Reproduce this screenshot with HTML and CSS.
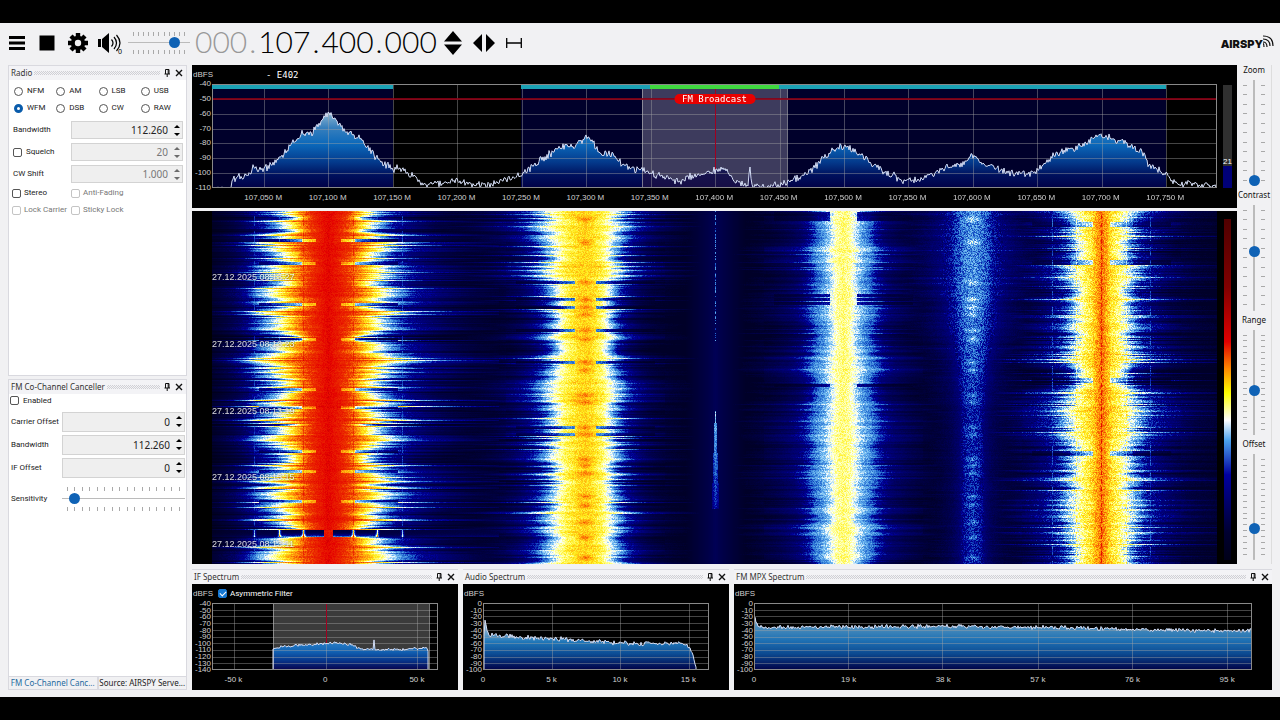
FILE: index.html
```html
<!DOCTYPE html>
<html lang="en">
<head>
<meta charset="utf-8">
<title>Radio receiver</title>
<link rel="stylesheet" href="styles.css">
</head>
<body>
<svg class="defs" aria-hidden="true">
  <symbol id="pin" viewBox="0 0 8 8"><path d="M2.5 .5h3.500v4.500M2.500 .5v4.500M5.200.5v4.500M1.500 5h5.500M4.200 5v3" fill="none" stroke="#111"/></symbol>
  <symbol id="close" viewBox="0 0 8 8"><path d="M1 1l6 6M7 1l-6 6" stroke="#111" stroke-width="1.400"/></symbol>
</svg>
<div class="app">
  <header class="toolbar">
    <button class="tool" aria-label="Menu"><svg width="18" height="16" viewBox="0 0 18 16"><path d="M1 2.500h16M1 8h16M1 13.500h16" stroke="#000" stroke-width="2.800"/></svg></button>
    <button class="tool" aria-label="Stop"><svg width="16" height="16" viewBox="0 0 16 16"><path d="M.5 .5h15v15h-15z"/></svg></button>
    <button class="tool" aria-label="Settings"><svg width="20" height="20" viewBox="-10 -10 20 20"><g stroke="#000" stroke-width="4.400"><path d="M0-10V10M-10 0H10M-7-7L7 7M7-7L-7 7"/></g><circle r="7.200"/><circle r="3.200" fill="#f1f1f3"/></svg></button>
    <button class="tool" aria-label="Mute"><svg width="26" height="22" viewBox="0 0 26 22"><path d="M1 7h3v8H1zM5 7l7-6v20l-7-6z"/><path d="M14.500 7.500q3 3.500 0 7M17 5q5 6 0 12M19.500 3q7 8 0 16" fill="none" stroke="#000" stroke-width="1.200"/><text x="21" y="22" class="tiny">0</text></svg></button>
    <div class="slider wide-slider volume"><div class="ticks" data-ticks="11"></div><input type="range" value="80" aria-label="Volume"><div class="ticks" data-ticks="11"></div></div>
    <div class="frequency" aria-label="Frequency"><span class="dim">000</span><i class="dim">.</i><span>107</span><i>.</i><span>400</span><i>.</i><span>000</span></div>
    <button class="tool step" aria-label="Tune up or down"><svg width="18" height="24" viewBox="0 0 18 24"><path d="M9 0l9 10.500H0zM9 24l9-10.500H0z"/></svg></button>
    <button class="tool step" aria-label="Tune left or right"><svg width="22" height="18" viewBox="0 0 22 18"><path d="M0 9L9 0v18zM22 9L13 0v18z"/></svg></button>
    <button class="tool step" aria-label="Snap"><svg width="16" height="12" viewBox="0 0 16 12"><path d="M.7 1v10M15.300 1v10M.7 6h14.600" stroke="#000" stroke-width="1.300"/></svg></button>
    <div class="logo"><span>AIRSPY</span><svg width="12" height="16" viewBox="0 0 12 16"><path d="M1 12q0-4-2-4M0 7q4 0 4 5M0 4q7 0 7 7M0 1q10 0 10 10" fill="none" stroke="#111" stroke-width="1.200"/></svg></div>
  </header>
  <main class="content">
    <aside class="dock">
      <section class="panel radio">
        <h2 class="title">Radio<span class="grip"></span><button aria-label="Pin"><svg><use href="#pin"/></svg></button><button aria-label="Close"><svg><use href="#close"/></svg></button></h2>
        <div class="form">
          <div class="modes">
            <label><input type="radio" name="mode">NFM</label><label><input type="radio" name="mode">AM</label><label><input type="radio" name="mode">LSB</label><label><input type="radio" name="mode">USB</label>
            <label><input type="radio" name="mode" checked>WFM</label><label><input type="radio" name="mode">DSB</label><label><input type="radio" name="mode">CW</label><label><input type="radio" name="mode">RAW</label>
          </div>
          <div class="field"><label for="bw">Bandwidth</label><div class="spin"><input id="bw" type="text" value="112.260"><button aria-label="Step bandwidth"></button></div></div>
          <div class="field"><label><input type="checkbox">Squelch</label><div class="spin off"><input type="text" value="20" aria-label="Squelch level" disabled><button aria-label="Step squelch" disabled></button></div></div>
          <div class="field"><label for="cw">CW Shift</label><div class="spin off"><input id="cw" type="text" value="1.000" disabled><button aria-label="Step shift" disabled></button></div></div>
          <div class="checks">
            <label><input type="checkbox">Stereo</label><label class="off"><input type="checkbox" disabled>Anti-Fading</label>
            <label class="off"><input type="checkbox" disabled>Lock Carrier</label><label class="off"><input type="checkbox" disabled>Sticky Lock</label>
          </div>
        </div>
      </section>
      <section class="panel canceller">
        <h2 class="title">FM Co-Channel Canceller<span class="grip"></span><button aria-label="Pin"><svg><use href="#pin"/></svg></button><button aria-label="Close"><svg><use href="#close"/></svg></button></h2>
        <div class="form">
          <label class="enable"><input type="checkbox">Enabled</label>
          <div class="field"><label for="co">Carrier Offset</label><div class="spin"><input id="co" type="text" value="0"><button aria-label="Step carrier"></button></div></div>
          <div class="field"><label for="cb">Bandwidth</label><div class="spin"><input id="cb" type="text" value="112.260"><button aria-label="Step bandwidth"></button></div></div>
          <div class="field"><label for="io">IF Offset</label><div class="spin"><input id="io" type="text" value="0"><button aria-label="Step offset"></button></div></div>
          <div class="field sens"><label for="se">Sensitivity</label><div class="slider wide-slider"><div class="ticks" data-ticks="16"></div><input id="se" type="range" value="6"><div class="ticks" data-ticks="16"></div></div></div>
        </div>
      </section>
      <nav class="tabs"><button class="active">FM Co-Channel Canc...</button><button>Source: AIRSPY Serve...</button></nav>
    </aside>
    <div class="work">
      <div class="upper">
        <div class="views">
          <section class="chart main-chart">
            <div class="head"><span class="unit">dBFS</span><span class="station">- E402</span></div>
            <div class="yaxis"><span>-40</span><span>-50</span><span>-60</span><span>-70</span><span>-80</span><span>-90</span><span>-100</span><span>-110</span></div>
            <div class="plot"><canvas data-chart="rf"></canvas><span class="tag">FM Broadcast</span></div>
            <div class="meter"><span>21</span><div class="level"></div></div>
            <div class="xaxis" data-start="5.1" data-step="6.41" data-labels="107,050 M|107,100 M|107,150 M|107,200 M|107,250 M|107,300 M|107,350 M|107,400 M|107,450 M|107,500 M|107,550 M|107,600 M|107,650 M|107,700 M|107,750 M"></div>
          </section>
          <section class="waterfall">
            <div class="fall"><canvas data-waterfall></canvas>
              <time>27.12.2025 08:13:27</time><time>27.12.2025 08:13:23</time><time>27.12.2025 08:13:19</time><time>27.12.2025 08:13:15</time><time>27.12.2025 08:13:11</time>
            </div>
            <div class="scale"></div>
          </section>
        </div>
        <aside class="sliders">
          <div class="vgroup"><label for="zoom">Zoom</label><div class="slider tall-slider"><div class="ticks" data-ticks="11"></div><input id="zoom" type="range" value="0"><div class="ticks" data-ticks="11"></div></div></div>
          <div class="vgroup"><label for="contrast">Contrast</label><div class="slider tall-slider"><div class="ticks" data-ticks="11"></div><input id="contrast" type="range" value="56"><div class="ticks" data-ticks="11"></div></div></div>
          <div class="vgroup"><label for="range">Range</label><div class="slider tall-slider"><div class="ticks" data-ticks="17"></div><input id="range" type="range" value="41"><div class="ticks" data-ticks="17"></div></div></div>
          <div class="vgroup"><label for="offset">Offset</label><div class="slider tall-slider"><div class="ticks" data-ticks="17"></div><input id="offset" type="range" value="27"><div class="ticks" data-ticks="17"></div></div></div>
        </aside>
      </div>
      <div class="lower">
        <section class="panel">
          <h2 class="title">IF Spectrum<span class="grip"></span><button aria-label="Pin"><svg><use href="#pin"/></svg></button><button aria-label="Close"><svg><use href="#close"/></svg></button></h2>
          <div class="chart">
            <div class="head"><span class="unit">dBFS</span><label class="asym"><input type="checkbox" checked>Asymmetric Filter</label></div>
            <div class="yaxis"><span>-40</span><span>-50</span><span>-60</span><span>-70</span><span>-80</span><span>-90</span><span>-100</span><span>-110</span><span>-120</span><span>-130</span><span>-140</span></div>
            <div class="plot"><canvas data-chart="if"></canvas></div>
            <div class="xaxis" data-start="9.5" data-step="40.6" data-labels="-50 k|0|50 k"></div>
          </div>
        </section>
        <section class="panel">
          <h2 class="title">Audio Spectrum<span class="grip"></span><button aria-label="Pin"><svg><use href="#pin"/></svg></button><button aria-label="Close"><svg><use href="#close"/></svg></button></h2>
          <div class="chart">
            <div class="head"><span class="unit">dBFS</span></div>
            <div class="yaxis"><span>0</span><span>-10</span><span>-20</span><span>-30</span><span>-40</span><span>-50</span><span>-60</span><span>-70</span><span>-80</span><span>-90</span><span>-100</span></div>
            <div class="plot"><canvas data-chart="audio"></canvas></div>
            <div class="xaxis" data-start="0" data-step="30.3" data-labels="0|5 k|10 k|15 k"></div>
          </div>
        </section>
        <section class="panel">
          <h2 class="title">FM MPX Spectrum<span class="grip"></span><button aria-label="Pin"><svg><use href="#pin"/></svg></button><button aria-label="Close"><svg><use href="#close"/></svg></button></h2>
          <div class="chart">
            <div class="head"><span class="unit">dBFS</span></div>
            <div class="yaxis"><span>0</span><span>-10</span><span>-20</span><span>-30</span><span>-40</span><span>-50</span><span>-60</span><span>-70</span><span>-80</span><span>-90</span><span>-100</span></div>
            <div class="plot"><canvas data-chart="mpx"></canvas></div>
            <div class="xaxis" data-start="0" data-step="19" data-labels="0|19 k|38 k|57 k|76 k|95 k"></div>
          </div>
        </section>
      </div>
    </div>
  </main>
</div>
<script src="script.js"></script>
</body>
</html>
```
FILE: styles.css
```css
* { box-sizing: border-box; }
body { margin: 0; padding: 23px 0; height: 100vh; min-height: 500px; display: flex; background: #000; color: #222; font: 8px/10px "Noto Sans", "Open Sans", sans-serif; }
button, input { font: inherit; color: inherit; }
button { border: 0; padding: 0; background: none; }
canvas { position: absolute; inset: 0; width: 100%; height: 100%; }
.defs { position: absolute; width: 0; height: 0; }
.app { flex: 1; min-width: 0; display: flex; flex-direction: column; background: #f1f1f3; }

.toolbar { height: 41px; display: flex; align-items: center; padding: 0 5px 2px 8px; }
.tool { display: flex; align-items: center; margin-right: 13px; }
.tool svg { display: block; }
.tool[aria-label="Settings"] { margin-right: 9px; }
.tool[aria-label="Mute"] { margin-right: 5px; }
.tool.step { margin-right: 11px; }
.tiny { font-size: 7px; }
.frequency { display: flex; margin: 0 7px 0 5px; padding-bottom: 3px; font: 300 30px/36px Lato, sans-serif; color: #000; }
.frequency i { width: 11px; text-align: center; font-style: normal; }
.frequency .dim { color: #999; }
.logo { margin-left: auto; display: flex; align-items: flex-start; }
.logo span { padding-top: 3px; font: 900 11px/12px Inter, sans-serif; color: #111; }

.content { flex: 1; min-height: 0; display: flex; gap: 5px; padding: 1px 8px 7px; }
.dock { width: 179px; display: flex; flex-direction: column; }
.panel { display: flex; flex-direction: column; min-width: 0; min-height: 0; border: 1px solid #d9d9df; background: #fff; }
.radio { flex: 311; margin-bottom: 3px; }
.canceller { flex: 298; }
.title { margin: 0; height: 14px; display: flex; align-items: center; gap: 2px; padding: 0 2px; background: #f3f3f6; font-size: 8px; font-weight: 400; white-space: nowrap; color: #333; }
.title button { width: 10px; height: 10px; display: grid; place-items: center; }
.title svg { width: 8px; height: 8px; }
.grip { flex: 1; height: 4px; background: repeating-conic-gradient(#d0d0d5 0 25%, #f3f3f6 0 50%) 0 0 / 2px 2px; }

.form { padding: 6px 3px 0 5px; }
.form label { display: flex; align-items: center; gap: 4px; white-space: nowrap; font-family: Roboto, sans-serif; }
input[type="radio"], input[type="checkbox"] { appearance: none; flex: none; margin: 0; width: 9px; height: 9px; border: 1px solid #555; background: #fff; border-radius: 2px; }
input[type="radio"] { border-radius: 50%; }
input[type="radio"]:checked { border: 3px solid #0a5cab; }
input:disabled { border-color: #c4c4c4; }
.off { color: #777; }
.modes { display: grid; grid-template-columns: repeat(4, 1fr); row-gap: 7px; margin-bottom: 8px; }
.field { display: grid; grid-template-columns: 57px minmax(0, 1fr); align-items: center; margin-bottom: 4px; }
.field > label { margin-left: -1px; }
.spin { display: flex; height: 18px; border: 1px solid #d3d3d3; background: #efefef; }
.spin input { flex: 1; width: 0; min-width: 0; padding: 0 4px; border: 0; background: none; text-align: right; font-size: 10px; }
.spin button { width: 10px; display: flex; flex-direction: column; align-items: center; justify-content: center; gap: 5px; }
.spin button::before, .spin button::after { content: ""; border: 3px solid transparent; border-top-width: 0; border-bottom-color: #000; }
.spin button::after { border-top: 3px solid #000; border-bottom-width: 0; }
.spin.off button { opacity: .55; }
.checks { display: grid; grid-template-columns: 59px 1fr; row-gap: 7px; padding-top: 1px; margin-left: -2px; }
.checks label { gap: 3px; }
.canceller .form { padding: 2px 1px 0 2px; }
.canceller .field { grid-template-columns: 51px minmax(0, 1fr); margin-bottom: 3px; }
.canceller .field > label { margin-left: 0; }
.canceller .spin { height: 20px; }
.enable { margin: 0 0 6px -1px; }
.canceller .sens { margin-top: 9px; }
.tabs { display: flex; height: 13px; white-space: nowrap; }
.tabs button { flex: 1; min-width: 0; overflow: hidden; border: 1px solid #d9d9df; border-top: 0; font-size: 8px; }
.tabs .active { color: #1f6b9f; }

.slider { display: flex; }
.slider input { appearance: none; margin: 0; background: none; }
.slider input::-webkit-slider-thumb { appearance: none; width: 11px; height: 11px; border: 0; border-radius: 50%; background: #0f62b5; }
.ticks { display: flex; justify-content: space-between; }
.ticks i { background: #a9a9a9; }
.wide-slider { flex-direction: column; gap: 2px; min-width: 0; }
.wide-slider input { width: 100%; height: 12px; background: linear-gradient(#bbb, #bbb) center / 100% 1px no-repeat; }
.wide-slider .ticks { padding: 0 5px; }
.wide-slider .ticks i { width: 1px; height: 4px; }
.volume { width: 62px; gap: 1px; }
.tall-slider { flex: 1; min-height: 0; gap: 1px; justify-content: center; }
.tall-slider input { writing-mode: vertical-lr; direction: rtl; width: 12px; height: 100%; background: linear-gradient(#bbb, #bbb) center / 2px 100% no-repeat; }
.tall-slider .ticks { flex-direction: column; padding: 5px 0; }
.tall-slider .ticks i { width: 4px; height: 1px; }

.work { flex: 1; min-width: 0; display: flex; flex-direction: column; gap: 5px; }
.upper { flex: 1; min-height: 0; display: flex; }
.views { flex: 1; min-width: 0; display: flex; flex-direction: column; gap: 3px; }
.sliders { width: 35px; display: flex; flex-direction: column; border-right: 1px solid #ddd; color: #111; }
.vgroup { flex: 1; min-height: 0; display: flex; flex-direction: column; text-align: center; gap: 5px; padding-bottom: 4px; }
.lower { height: 121px; display: grid; grid-template-columns: 266fr 266fr 538fr; grid-template-rows: minmax(0, 1fr); gap: 5px; }
.lower .panel { border-width: 1px 0 0; }

.chart { flex: 1; min-height: 0; display: grid; grid-template-columns: 20px 1fr 20px; grid-template-rows: 19px minmax(0, 1fr) 20px; background: #000; color: #d0d0d0; font: 8px/8px "Liberation Sans", Arial, sans-serif; }
.head { grid-column: 1 / -1; display: flex; align-items: center; padding-left: 1px; }
.yaxis { grid-column: 1; min-height: 0; display: flex; flex-direction: column; justify-content: space-between; margin: -4px 0; text-align: right; padding-right: 1px; }
.yaxis span { flex: 0 1 8px; min-height: 0; line-height: 8px; }
.lower .yaxis { margin: -3px 0; }
.lower .yaxis span { flex: 1 1 0; line-height: 7px; white-space: nowrap; }
.plot { position: relative; }
.xaxis { position: relative; grid-column: 2; }
.xaxis span { position: absolute; top: 6px; transform: translateX(-50%); white-space: nowrap; }
.main-chart { flex: 0 0 143px; }
.station { margin-left: 53px; color: #fff; font: 9px/10px "DejaVu Sans Mono", monospace; }
.tag { position: absolute; left: 50%; top: 10px; transform: translateX(-50%); padding: 0 8px; border-radius: 5px; background: #e80000; color: #fff; font: 9px/10px "DejaVu Sans Mono", monospace; white-space: nowrap; }
.meter { margin: 1px 5px 0 6px; display: flex; flex-direction: column; justify-content: flex-end; background: #303030; color: #fff; text-align: center; }
.level { height: 21%; background: #000078; }
.asym { display: flex; align-items: center; gap: 3px; margin-left: 5px; color: #fff; font: 8px/10px Roboto, sans-serif; }
.asym input:checked { border-color: #1677d2; background: conic-gradient(from 45deg at 40% 75%, transparent 0 0) #1677d2; position: relative; }
.asym input:checked::after { content: ""; position: absolute; left: 2px; top: 0; width: 3px; height: 5px; border: solid #fff; border-width: 0 1px 1px 0; transform: rotate(45deg); }
.waterfall { flex: 1; min-height: 0; display: grid; grid-template-columns: 1fr 20px; padding-left: 20px; background: #000; }
.fall { position: relative; display: flex; flex-direction: column; justify-content: space-between; padding: 61px 0 15px; color: #fff; font: 9px/10px "Liberation Sans", Arial, sans-serif; }
.fall time { position: relative; text-shadow: 0 0 2px #000; opacity: .85; }
.scale { margin: 8px 6px 4px 7px; background: linear-gradient(#500000, #800000 20%, #e00000 36%, #ff8a00 44%, #ffff00 51%, #fff 59%, #4aa2ed 65%, #0000a0 75%, #000030 92%, #000018); }
```
FILE: script.js
```js
// Repeatable random numbers keep the traces steady between redraws.
function makeRandom(seed) {
  return function () {
    seed = (seed + 0x6D2B79F5) | 0;
    let t = Math.imul(seed ^ (seed >>> 15), 1 | seed);
    t = (t + Math.imul(t ^ (t >>> 7), 61 | t)) ^ t;
    return ((t ^ (t >>> 14)) >>> 0) / 4294967296;
  };
}

function interpolate(points, x) {
  if (x <= points[0][0]) return points[0][1];
  for (let i = 1; i < points.length; i++) {
    if (x <= points[i][0]) {
      const a = points[i - 1], b = points[i];
      return a[1] + (b[1] - a[1]) * (x - a[0]) / (b[0] - a[0]);
    }
  }
  return points[points.length - 1][1];
}

document.querySelectorAll('[data-ticks]').forEach(el => {
  for (let i = 0; i < +el.dataset.ticks; i++) el.append(document.createElement('i'));
});

document.querySelectorAll('.xaxis').forEach(el => {
  el.dataset.labels.split('|').forEach((text, i) => {
    const label = document.createElement('span');
    label.textContent = text;
    label.style.left = (+el.dataset.start + i * +el.dataset.step) + '%';
    el.append(label);
  });
});

// Trace points are given on a w by h design grid and scaled to the canvas.
const charts = {
  rf: {
    w: 1005, h: 104, rows: 7, grid: [51.5, 116, 181, 245, 309.5, 374, 438.5, 503, 567.5, 631.5, 696, 760.5, 825, 889.5, 954], noise: 4.6,
    bands: [[0, 181], [309, 954]], select: [430, 575], tuned: 503, green: [438, 567], limit: 14.5,
    stops: [[0, '#a8c4dc'], [.28, '#8ab4d0'], [.42, '#377fbd'], [.58, '#0b68ba'], [.75, '#043a8c'], [.88, '#00105c'], [1, '#000046']],
    points: [[0,104],[19,104],[21,97],[28,92],[34,91],[41,85],[50,86],[63,78],[73,69],[80,58],[90,50],[100,48],[110,35],[116,28],[124,36],[133,47],[146,53],[158,66],[168,77],[180,84],[191,85],[204,96],[213,100],[228,99],[245,96],[258,100],[278,101],[291,97],[305,91],[318,84],[333,73],[346,65],[354,60],[361,62],[373,54],[378,54],[385,65],[391,70],[400,70],[413,83],[428,86],[448,92],[466,98],[478,93],[503,87],[512,84],[516,88],[523,96],[531,101],[536,101],[538,84],[540,101],[553,103],[573,99],[588,93],[603,83],[613,72],[623,65],[633,63],[643,66],[658,79],[673,88],[688,95],[698,97],[713,93],[728,86],[748,80],[760,72],[773,80],[793,88],[808,90],[824,88],[836,76],[845,70],[858,65],[870,62],[878,56],[886,50],[898,54],[913,59],[928,66],[938,82],[948,86],[955,92],[963,100],[983,99],[998,102],[1005,103]]
  },
  if: {
    w: 226, h: 66, rows: 10, grid: [21.5, 113.5, 205], noise: 1.6, select: [61, 217], tuned: 113.5,
    stops: [[0, '#a8c4dc'], [.55, '#2f86cc'], [.72, '#1263b4'], [.86, '#07358a'], [1, '#07004c']],
    points: [[60,66],[61,46],[68,43],[113,40],[123,39],[138,41],[148,45],[161,46],[162,36],[163,46],[188,46],[215,44],[216,47],[217,66]]
  },
  audio: {
    w: 226, h: 66, rows: 10, grid: [69, 137, 206], noise: 3,
    stops: [[0, '#e0e8ee'], [.45, '#6a9fc6'], [.58, '#1f77b9'], [.76, '#0c4c94'], [1, '#000046']],
    points: [[0,66],[1,34],[2,18],[4,27],[6,31],[17,32],[37,34],[67,35],[97,37],[127,39],[157,40],[198,40],[205,42],[209,49],[214,66]]
  },
  mpx: {
    w: 497, h: 66, rows: 10, grid: [94, 188, 283, 377, 472], noise: 2.4,
    stops: [[0, '#e0e8ee'], [.36, '#4c8cba'], [.55, '#1f72b5'], [.76, '#0c4990'], [1, '#000046']],
    points: [[0,26],[1,14],[2,19],[4,24],[200,23],[300,24],[420,27],[497,27]]
  }
};

function drawChart(canvas) {
  const c = charts[canvas.dataset.chart];
  const W = canvas.width = canvas.clientWidth, H = canvas.height = canvas.clientHeight;
  const g = canvas.getContext('2d'), random = makeRandom(31 + c.w);
  const sx = W / c.w, sy = H / c.h;
  (c.bands || []).forEach(b => {
    g.fillStyle = '#00002b';
    g.fillRect(b[0] * sx, 0, (b[1] - b[0]) * sx, H);
  });
  if (c.select) {
    g.fillStyle = c.bands ? '#3d3b5d' : '#3b3b3b';
    g.fillRect(c.select[0] * sx, 0, (c.select[1] - c.select[0]) * sx, H);
  }
  const trace = [];
  for (let x = 0; x <= W; x++) {
    const base = interpolate(c.points, x / sx);
    if (base > c.h - .5 && !c.bands) continue;
    const n = (random() + random() - 1) * c.noise * (base > c.h - 1 ? .2 : 1);
    trace.push([x, Math.min(H - .5, (base + n) * sy)]);
  }
  if (!c.bands) {
    trace.unshift([trace[0][0], H]);
    if (interpolate(c.points, c.w) > c.h - 1 || c.select) trace.push([trace[trace.length - 1][0], H]);
  }
  g.save();
  if (c.bands) {
    g.beginPath();
    c.bands.forEach(b => g.rect(b[0] * sx, 0, (b[1] - b[0]) * sx, H));
    g.clip();
  }
  const fill = g.createLinearGradient(0, 0, 0, H);
  c.stops.forEach(s => fill.addColorStop(s[0], s[1]));
  g.beginPath();
  g.moveTo(trace[0][0], H);
  trace.forEach(p => g.lineTo(p[0], p[1]));
  g.lineTo(trace[trace.length - 1][0], H);
  g.fillStyle = fill;
  g.fill();
  if (c.bands) {
    g.clip();
    g.fillStyle = 'rgba(32,20,70,.7)';
    g.fillRect(c.select[0] * sx, 0, (c.select[1] - c.select[0]) * sx, H);
  }
  g.restore();
  g.fillStyle = 'rgba(165,165,165,.42)';
  for (let i = 1; i < c.rows; i++) g.fillRect(0, Math.round(H * i / c.rows), W, 1);
  c.grid.forEach(x => g.fillRect(Math.round(x * sx), 0, 1, H));
  if (c.select) {
    g.fillStyle = 'rgba(190,190,190,.6)';
    c.select.forEach(x => g.fillRect(Math.round(x * sx), 0, 1, H));
  }
  if (c.tuned) {
    g.fillStyle = '#a00020';
    g.fillRect(Math.round(c.tuned * sx), 0, 1, H * (c.bands ? .82 : .6));
  }
  if (c.limit) {
    g.fillStyle = 'rgba(140,0,20,.85)';
    g.fillRect(0, Math.round(c.limit * sy) - 1, W, 2);
  }
  g.strokeStyle = '#d5def5';
  g.lineWidth = 1;
  g.beginPath();
  trace.forEach(p => g.lineTo(p[0], p[1]));
  g.stroke();
  g.strokeStyle = '#898989';
  g.strokeRect(.5, .5, W - 1, H - 1);
  if (c.bands) {
    g.fillStyle = '#1ba2b5';
    c.bands.forEach(b => g.fillRect(b[0] * sx, 1, (b[1] - b[0]) * sx, 4));
    g.fillStyle = '#3fd83f';
    g.fillRect(c.green[0] * sx, 1, (c.green[1] - c.green[0]) * sx, 4);
  }
}

const palette = [[0,0,0,18],[.12,0,0,72],[.25,0,0,155],[.32,30,100,205],[.4,110,185,240],[.46,250,255,255],[.52,255,255,140],[.58,255,235,25],[.66,255,145,10],[.74,236,50,0],[.85,228,0,0],[1,90,0,0]];
const colours = [];
for (let i = 0; i <= 400; i++) {
  colours.push([1, 2, 3].map(k => interpolate(palette.map(p => [p[0], p[k]]), i / 400)));
}

// Each station: centre, level by distance from it, edge raggedness, quiet rows.
const stations = [
  { x: 116, ragged: .8, grain: .04, gaps: [29, 52, 93, 128, 178, 196, 240, 260, 290], quiet: 12, lines: [25, 49, 74],
    profile: [[0,.84],[10,.79],[20,.73],[28,.67],[34,.61],[41,.54],[47,.47],[54,.41],[62,.34],[72,.25],[90,.19],[120,.11],[170,.04]] },
  { x: 373, ragged: .7, grain: .045, gaps: [71, 88, 96, 119, 151, 216, 223], quiet: 10, lines: [],
    profile: [[0,.6],[6,.59],[12,.57],[18,.54],[24,.47],[30,.41],[36,.33],[42,.25],[58,.15],[80,.08],[120,.03]] },
  { x: 631, ragged: .45, grain: .05, gaps: [2, 5, 8, 84, 88, 92, 174], quiet: 13, lines: [],
    profile: [[0,.53],[6,.51],[10,.47],[14,.43],[20,.38],[28,.33],[34,.25],[44,.17],[70,.1],[105,.03]] },
  { x: 760, ragged: .5, grain: .08, gaps: [], quiet: 60, lines: [],
    profile: [[0,.36],[8,.34],[14,.31],[20,.24],[32,.18],[56,.11],[90,.04]] },
  { x: 889, ragged: .8, grain: .07, gaps: [13, 51, 169, 242], quiet: 8, lines: [25, 49],
    profile: [[0,.69],[5,.64],[10,.58],[17,.54],[23,.48],[30,.41],[36,.34],[42,.26],[60,.18],[84,.1],[140,.03]] }
];
const hotRows = [8, 31, 71, 88, 96, 103, 119, 128, 151, 159, 184, 191, 216, 223, 248, 254, 262, 285, 294, 311, 326, 346];

function drawWaterfall(canvas) {
  const W = canvas.width = canvas.clientWidth, H = canvas.height = canvas.clientHeight;
  const g = canvas.getContext('2d'), image = g.createImageData(W, H), random = makeRandom(77);
  const sx = 1005 / W, sy = 353 / H;
  stations.forEach(s => {
    s.rows = [];
    s.levels = [];
    let slow = 0, mid = 0, level = 0;
    for (let y = 0; y < H; y++) {
      slow = slow * .9 + (random() - .5) * .2;
      mid = mid * .5 + (random() - .5) * .8;
      level = level * .6 + (random() - .5) * .045;
      const spike = random() < .18 ? random() * .8 : 0;
      s.rows.push(Math.max(.55, 1 + s.ragged * (slow + mid * .6 + spike)));
      s.levels.push(level);
    }
  });
  for (let y = 0; y < H; y++) {
    const ry = y * sy;
    const heat = Math.max(0, ...hotRows.map(r => 1 - Math.abs(r - ry) / 4));
    for (let x = 0; x < W; x++) {
      const rx = x * sx;
      let v = .05;
      stations.forEach((s, n) => {
        const side = rx - s.x;
        let d = Math.abs(side);
        if (d > 170) return;
        let scale = 1 + (s.rows[y] - 1) * Math.min(1, d / 34);
        if (n === 1) scale *= side < 0 ? 1.12 : .92;
        let p = interpolate(s.profile, d / scale) + s.levels[y] * Math.min(1, d / 12) * (d < 80 ? 1 : .2);
        if (n === 1) p += heat * .09 * Math.max(0, 1 - d / 12);
        if (n === 3) {
          const fade = Math.min(1, Math.max(0, (ry - 90) / 110));
          p = interpolate(s.profile, d / scale * (1 + fade * .6)) * (1 - fade * .26);
          p += heat * .09 * Math.max(0, 1 - d / 11);
        }
        const gap = s.gaps.some(r => Math.abs(r - ry) < (n === 4 ? 3 : 1.2));
        if (gap && d > s.quiet && d < 70) p = n === 0 && d < 27 ? p - .12 : n === 4 && d < 32 ? p * .75 : p * .6;
        if (n === 0 && ry > 318 && ry < 326) {
          const near = Math.min(...[0, 25, 49, 74].map(k => Math.abs(d - k)));
          const arc = Math.pow((ry - 318) / 8, 3);
          p = d < 5 ? .8 : Math.max(.1, (.62 - d * .003) * Math.exp(-near / 2)) + arc * .35 * (d < 50 ? 1 : .3);
        }
        s.lines.forEach(k => {
          if (Math.abs(d - k) < .8 && (gap || (Math.floor(ry / 5) % 3 !== 0))) p = k === 25 ? p + .06 : Math.max(p, .3);
        });
        if (n === 4 && d < 1 && Math.floor(ry / 4) % 2) p += .12;
        p += (random() - .5) * s.grain * (p > .2 ? 1.6 : .4);
        v = Math.max(v, p);
      });
      const carrier = Math.abs(rx - 503);
      if (carrier < 30) v = Math.max(v, .14 - carrier * .003);
      if (ry < 130 && carrier < .8 && random() < .5) v = .28 + random() * .12;
      if (ry > 199 && ry < 298) {
        const spread = .6 + (ry - 199) / 30;
        if (carrier < spread) v = Math.max(v, .41 - (ry - 199) * .0014 - carrier * .025 + (random() - .5) * .08);
      }
      if (rx < 45) v *= .4 + rx / 75;
      const rgb = colours[Math.max(0, Math.min(400, Math.round(v * 400)))];
      const i = (y * W + x) * 4;
      image.data[i] = rgb[0];
      image.data[i + 1] = rgb[1];
      image.data[i + 2] = rgb[2];
      image.data[i + 3] = 255;
    }
  }
  g.putImageData(image, 0, 0);
}

function drawAll() {
  document.querySelectorAll('[data-chart]').forEach(drawChart);
  drawWaterfall(document.querySelector('[data-waterfall]'));
}
drawAll();
window.addEventListener('resize', drawAll);
```
